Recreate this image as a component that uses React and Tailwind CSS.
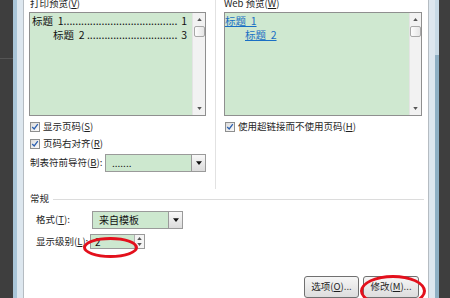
import React from "react";

const DOTS = ".".repeat(120);

function Check() {
  return (
    <div className="w-[10px] h-[10px] border border-[#8e8f8f] bg-gradient-to-br from-[#dcdcdc] to-[#fbfbfb] flex items-center justify-center shrink-0">
      <svg viewBox="0 0 10 10" className="w-[8px] h-[8px]">
        <path d="M1.5 5 L4 7.5 L8.5 1.5" fill="none" stroke="#2a5fb0" strokeWidth="1.6" />
      </svg>
    </div>
  );
}

function ArrowBtn({ w = "w-[14px]" }) {
  return (
    <div className={`${w} h-full border-l border-[#9a9a9a] bg-gradient-to-b from-[#f8f8f8] to-[#dcdcdc] flex items-center justify-center`}>
      <svg viewBox="0 0 8 5" className="w-[6px] h-[4px]">
        <path d="M0 0 H8 L4 5 Z" fill="#111" />
      </svg>
    </div>
  );
}

function Scrollbar({ w }) {
  return (
    <div className={`${w} h-full bg-[#f2f2f2] border-l border-[#e4e4e4] flex flex-col items-center shrink-0`}>
      <svg viewBox="0 0 6 4" className="w-[5px] h-[3px] mt-[5px]">
        <path d="M0 4 L3 0 L6 4 Z" fill="#555" />
      </svg>
      <div className="w-[11px] h-[11px] mt-[5px] border border-[#a8a8a8] rounded-[2px] bg-gradient-to-r from-[#fdfdfd] to-[#e6e6e6]" />
      <div className="flex-1" />
      <svg viewBox="0 0 6 4" className="w-[5px] h-[3px] mb-[5px]">
        <path d="M0 0 L3 4 L6 0 Z" fill="#555" />
      </svg>
    </div>
  );
}

function Dropdown({ text, className }) {
  return (
    <div className={`flex border border-[#9a9a9a] bg-[#cde8cf] ${className}`}>
      <div className="flex-1 flex items-center pl-[6px] text-[10px] text-[#111]">{text}</div>
      <ArrowBtn />
    </div>
  );
}

export default function App() {
  return (
    <div
      className="w-[450px] h-[298px] flex overflow-hidden bg-white text-[#1e1e1e] text-[9.5px] leading-none"
      style={{ fontFamily: '"Noto Sans CJK SC", "Noto Sans", sans-serif' }}
    >
      {/* left window frame */}
      <div className="w-[13px] bg-[#3e3e3e] flex flex-col">
        <div className="h-[58px]" />
        <div className="h-px bg-[#555]" />
      </div>
      <div className="w-[4px] bg-[#a9c5d8]" />
      <div className="w-[6px] bg-[#dde7ef]" />
      <div className="w-px bg-[#b5bcc2]" />

      {/* dialog body */}
      <div className="relative flex-1 min-w-0 flex flex-col overflow-hidden">
        <div className="flex h-[193px]">
          {/* print preview */}
          <div className="ml-[5px] w-[177px] shrink-0 flex flex-col">
            <div className="h-[13px] flex items-start pl-[1px] -mt-[1px]">
              打印预览(<span className="underline">V</span>)
            </div>
            <div className="h-[104px] flex border border-[#8f8f8f]">
              <div className="flex-1 min-w-0 overflow-hidden bg-[#cfe8d0] pt-[1px] pr-[5px] text-[10.5px] leading-[14px] text-[#111]">
                <div className="flex pl-[2px]">
                  <span className="whitespace-pre">标题  1</span>
                  <span className="flex-1 min-w-0 overflow-hidden whitespace-nowrap">{DOTS}</span>
                  <span className="ml-[3px]">1</span>
                </div>
                <div className="flex pl-[23px]">
                  <span className="whitespace-pre">标题  2 </span>
                  <span className="flex-1 min-w-0 overflow-hidden whitespace-nowrap">{DOTS}</span>
                  <span className="ml-[3px]">3</span>
                </div>
              </div>
              <Scrollbar w="w-[13px]" />
            </div>
            <div className="mt-[2px] h-[17px] flex items-center gap-[3px] pl-[1px]">
              <Check />
              <span>显示页码(<span className="underline">S</span>)</span>
            </div>
            <div className="h-[17px] flex items-center gap-[3px] pl-[1px]">
              <Check />
              <span>页码右对齐(<span className="underline">R</span>)</span>
            </div>
            <div className="mt-[2px] h-[18px] flex items-center">
              <span className="w-[76px] pl-[1px]">制表符前导符(<span className="underline">B</span>):</span>
              <Dropdown text="......." className="w-[101px] h-full" />
            </div>
          </div>

          {/* separator */}
          <div className="ml-[9px] w-px bg-[#e2e2e2]" />

          {/* web preview */}
          <div className="ml-[8px] w-[198px] shrink-0 flex flex-col">
            <div className="h-[13px] flex items-start -mt-[1px]">
              Web 预览(<span className="underline">W</span>)
            </div>
            <div className="h-[104px] flex border border-[#8f8f8f]">
              <div className="flex-1 min-w-0 bg-[#cfe8d0] pt-[1px] text-[10.5px] leading-[14px] text-[#1a6fc4]">
                <div className="underline whitespace-pre">标题  1</div>
                <div className="underline whitespace-pre pl-[20px]">标题  2</div>
              </div>
              <Scrollbar w="w-[12px]" />
            </div>
            <div className="mt-[2px] h-[17px] flex items-center gap-[3px] pl-[1px]">
              <Check />
              <span>使用超链接而不使用页码(<span className="underline">H</span>)</span>
            </div>
          </div>
        </div>

        {/* general group */}
        <div className="h-[20px] flex items-center ml-[6px] w-[394px]">
          <span>常规</span>
          <div className="flex-1 ml-[4px] h-px bg-[#dcdcdc]" />
        </div>
        <div className="mt-[2px] h-[18px] flex items-center ml-[12px]">
          <span className="w-[56px]">格式(<span className="underline">T</span>):</span>
          <Dropdown text="来自模板" className="w-[91px] h-full" />
        </div>
        <div className="mt-[5px] h-[16px] flex items-center ml-[12px]">
          <span className="w-[54px]">显示级别(<span className="underline">L</span>):</span>
          <div className="w-[55px] h-full flex border border-[#9a9a9a] bg-[#cde8cf]">
            <div className="flex-1 flex items-center pl-[4px] text-[10px] text-[#111]">2</div>
            <div className="w-[10px] h-full border-l border-[#b0b0b0] bg-[#f4f4f4] flex flex-col items-center justify-around">
              <svg viewBox="0 0 6 4" className="w-[5px] h-[3px]">
                <path d="M0 4 L3 0 L6 4 Z" fill="#555" />
              </svg>
              <svg viewBox="0 0 6 4" className="w-[5px] h-[3px]">
                <path d="M0 0 L3 4 L6 0 Z" fill="#555" />
              </svg>
            </div>
          </div>
        </div>

        {/* buttons */}
        <div className="mt-[27px] h-[22px] flex justify-end gap-[4px] mr-[9px]">
          <div className="w-[55px] h-full border border-[#707070] rounded-[3px] bg-gradient-to-b from-[#f6f6f6] to-[#dddddd] flex items-center justify-center">
            选项(<span className="underline">O</span>)...
          </div>
          <div className="w-[56px] h-full border border-[#707070] rounded-[3px] bg-gradient-to-b from-[#f6f6f6] to-[#dddddd] flex items-center justify-center">
            修改(<span className="underline">M</span>)...
          </div>
        </div>

        {/* red annotation ellipses */}
        <div className="absolute left-[59px] top-[237px] w-[55px] h-[21px] rounded-[50%] border-[3px] border-[#e3101c]" />
        <div className="absolute left-[336px] top-[275px] w-[66px] h-[32px] rounded-[50%] border-[3px] border-[#e3101c]" />
      </div>

      {/* right window frame */}
      <div className="w-px bg-[#b5bcc2]" />
      <div className="w-[6px] bg-[#dde7ef]" />
      <div className="w-[4px] flex flex-col">
        <div className="h-[55px] bg-[#c8dae6]" />
        <div className="flex-1 bg-[#8fb0c4]" />
      </div>
      <div className="w-[11px] bg-[#3e3e3e]" />
    </div>
  );
}
